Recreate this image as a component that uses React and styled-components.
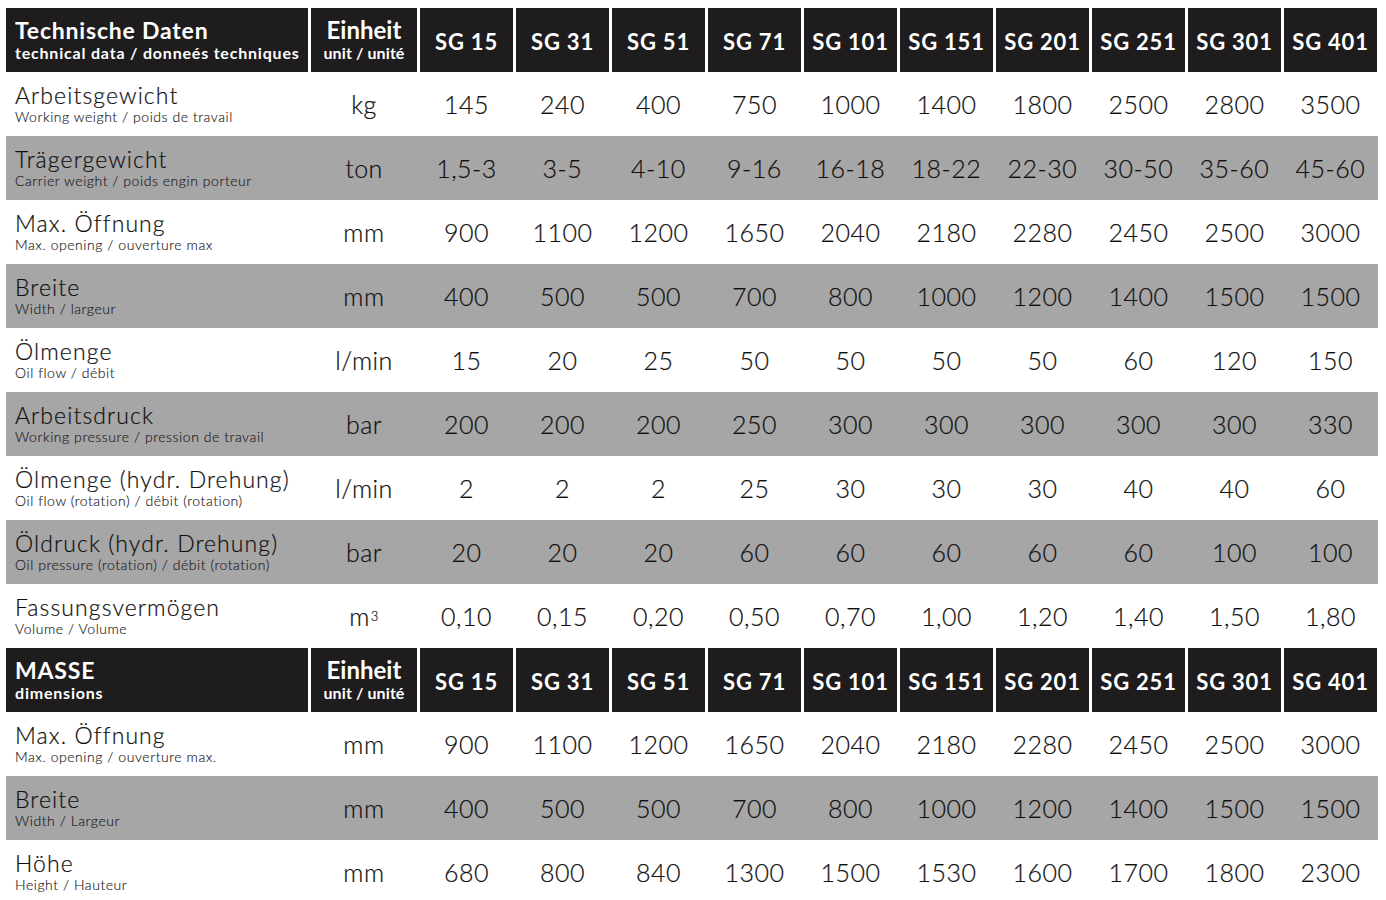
import React from 'react';
import styled, { createGlobalStyle } from 'styled-components';

const FONT = `'Lato', 'Liberation Sans', sans-serif`;

const GlobalStyle = createGlobalStyle`
  html, body {
    margin: 0;
    padding: 0;
    background: #ffffff;
  }
  body {
    font-family: ${FONT};
    color: #141212;
  }
`;

const Sheet = styled.div`
  padding: 8px 0 0 6px;
  width: 1380px;
  height: 892px;
  overflow: hidden;
`;

const Row = styled.div`
  display: grid;
  grid-template-columns: 302px 106px repeat(10, 93px);
  column-gap: 3px;
  height: 64px;
  width: 1372px;
  background: ${(p) => (p.$shade ? '#a7a6a7' : 'transparent')};
`;

const HeadCell = styled.div`
  background: #1e1c1c;
  color: #ffffff;
  display: flex;
  flex-direction: column;
  justify-content: center;
  align-items: ${(p) => (p.$left ? 'flex-start' : 'center')};
  padding-left: ${(p) => (p.$left ? '9px' : '0')};
  font-weight: 700;
`;

const HeadTitle = styled.div`
  font-size: 23px;
  line-height: 25px;
  letter-spacing: 0.8px;
`;

const HeadSub = styled.div`
  font-size: 16px;
  line-height: 20px;
  letter-spacing: ${(p) => (p.$wide ? '0.8px' : '0.1px')};
`;

const UnitTitle = styled.div`
  font-size: 24px;
  line-height: 26px;
`;

const Model = styled.div`
  font-size: 22px;
  letter-spacing: 0.8px;
  padding-top: 2px;
`;

const Label = styled.div`
  display: flex;
  flex-direction: column;
  justify-content: center;
  padding-left: 9px;
  padding-bottom: 1px;
`;

const LabelMain = styled.div`
  font-size: 23px;
  line-height: 25px;
  font-weight: 300;
  letter-spacing: 1.1px;
  color: #111010;
  -webkit-text-stroke: 0.2px #111010;
`;

const LabelSub = styled.div`
  font-size: 14px;
  line-height: 17px;
  font-weight: 300;
  letter-spacing: 0.55px;
  color: #1c1a1a;
  -webkit-text-stroke: 0.15px #1c1a1a;
`;

const Value = styled.div`
  display: flex;
  align-items: center;
  justify-content: center;
  font-size: 25px;
  font-weight: 300;
  letter-spacing: 0.5px;
  color: #111010;
  -webkit-text-stroke: 0.2px #111010;
  padding-bottom: 1px;

  sup {
    font-size: 13px;
    line-height: 0;
    vertical-align: 9px;
    margin-left: 1px;
  }
`;

const models = ['SG 15', 'SG 31', 'SG 51', 'SG 71', 'SG 101', 'SG 151', 'SG 201', 'SG 251', 'SG 301', 'SG 401'];

const technical = [
  ['Arbeitsgewicht', 'Working weight  / poids de travail', 'kg', ['145', '240', '400', '750', '1000', '1400', '1800', '2500', '2800', '3500']],
  ['Trägergewicht', 'Carrier weight / poids engin porteur', 'ton', ['1,5-3', '3-5', '4-10', '9-16', '16-18', '18-22', '22-30', '30-50', '35-60', '45-60']],
  ['Max. Öffnung', 'Max. opening / ouverture max', 'mm', ['900', '1100', '1200', '1650', '2040', '2180', '2280', '2450', '2500', '3000']],
  ['Breite', 'Width / largeur', 'mm', ['400', '500', '500', '700', '800', '1000', '1200', '1400', '1500', '1500']],
  ['Ölmenge', 'Oil flow / débit', 'l/min', ['15', '20', '25', '50', '50', '50', '50', '60', '120', '150']],
  ['Arbeitsdruck', 'Working pressure / pression de travail', 'bar', ['200', '200', '200', '250', '300', '300', '300', '300', '300', '330']],
  ['Ölmenge (hydr. Drehung)', 'Oil flow (rotation) / débit (rotation)', 'l/min', ['2', '2', '2', '25', '30', '30', '30', '40', '40', '60']],
  ['Öldruck (hydr. Drehung)', 'Oil pressure (rotation) / débit (rotation)', 'bar', ['20', '20', '20', '60', '60', '60', '60', '60', '100', '100']],
  ['Fassungsvermögen', 'Volume / Volume', 'm3', ['0,10', '0,15', '0,20', '0,50', '0,70', '1,00', '1,20', '1,40', '1,50', '1,80']],
];

const dimensions = [
  ['Max. Öffnung', 'Max. opening / ouverture max.', 'mm', ['900', '1100', '1200', '1650', '2040', '2180', '2280', '2450', '2500', '3000']],
  ['Breite', 'Width / Largeur', 'mm', ['400', '500', '500', '700', '800', '1000', '1200', '1400', '1500', '1500']],
  ['Höhe', 'Height / Hauteur', 'mm', ['680', '800', '840', '1300', '1500', '1530', '1600', '1700', '1800', '2300']],
];

function Unit({ unit }) {
  if (unit === 'm3') {
    return (
      <Value>
        m<sup>3</sup>
      </Value>
    );
  }
  return <Value>{unit}</Value>;
}

function HeaderRow({ title, sub }) {
  return (
    <Row>
      <HeadCell $left>
        <HeadTitle>{title}</HeadTitle>
        <HeadSub $wide>{sub}</HeadSub>
      </HeadCell>
      <HeadCell>
        <UnitTitle>Einheit</UnitTitle>
        <HeadSub>unit / unité</HeadSub>
      </HeadCell>
      {models.map((m) => (
        <HeadCell key={m}>
          <Model>{m}</Model>
        </HeadCell>
      ))}
    </Row>
  );
}

function DataRow({ row, shade }) {
  const [name, sub, unit, values] = row;
  return (
    <Row $shade={shade}>
      <Label>
        <LabelMain>{name}</LabelMain>
        <LabelSub>{sub}</LabelSub>
      </Label>
      <Unit unit={unit} />
      {values.map((v, i) => (
        <Value key={i}>{v}</Value>
      ))}
    </Row>
  );
}

export default function App() {
  return (
    <>
      <GlobalStyle />
      <Sheet>
        <HeaderRow title="Technische Daten" sub="technical data / donneés techniques" />
        {technical.map((row, i) => (
          <DataRow key={row[0]} row={row} shade={i % 2 === 1} />
        ))}
        <HeaderRow title="MASSE" sub="dimensions" />
        {dimensions.map((row, i) => (
          <DataRow key={row[0] + i} row={row} shade={i % 2 === 1} />
        ))}
      </Sheet>
    </>
  );
}
